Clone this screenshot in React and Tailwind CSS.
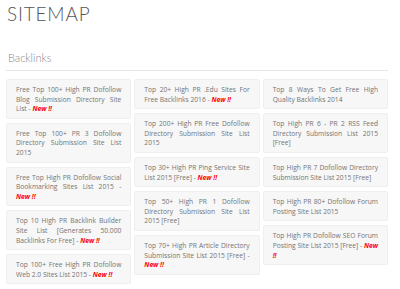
const columns = [
  [
    { t: 'Free Top 100+ High PR Dofollow Blog Submission Directory Site List', n: true },
    { t: 'Free Top 100+ PR 3 Dofollow Directory Submission Site List 2015' },
    { t: 'Free Top High PR Dofollow Social Bookmarking Sites List 2015', n: true },
    { t: 'Top 10 High PR Backlink Builder Site List [Generates 50.000 Backlinks For Free]', n: true },
    { t: 'Top 100+ Free High PR Dofollow Web 2.0 Sites List 2015', n: true },
  ],
  [
    { t: 'Top 20+ High PR .Edu Sites For Free Backlinks 2016', n: true },
    { t: 'Top 200+ High PR Free Dofollow Directory Submission Site List 2015' },
    { t: 'Top 30+ High PR Ping Service Site List 2015 [Free]', n: true },
    { t: 'Top 50+ High PR 1 Dofollow Directory Submission Site List 2015 [Free]' },
    { t: 'Top 70+ High PR Article Directory Submission Site List 2015 [Free]', n: true },
  ],
  [
    { t: 'Top 8 Ways To Get Free High Quality Backlinks 2014' },
    { t: 'Top High PR 6 - PR 2 RSS Feed Directory Submission List 2015 [Free]' },
    { t: 'Top High PR 7 Dofollow Directory Submission Site List 2015 [Free]' },
    { t: 'Top High PR 80+ Dofollow Forum Posting Site List 2015' },
    { t: 'Top High PR Dofollow SEO Forum Posting Site List 2015 [Free]', n: true },
  ],
];

function Card({ item }) {
  return (
    <div className="rounded-[2px] border border-[#efefef] bg-[#f7f7f7] px-[9px] pt-[5px] pb-[4px] text-justify text-[6.7px] leading-[9.6px] text-[#747474]">
      {item.t}
      {item.n && (
        <>
          {' - '}
          <span className="font-bold italic text-[#f00]">New !!</span>
        </>
      )}
    </div>
  );
}

export default function App() {
  return (
    <div className="h-[289px] w-[400px] overflow-hidden bg-white pl-[6px]" style={{ fontFamily: '"Open Sans", sans-serif' }}>
      <h1 className="pt-[3px] pl-[1px] text-[19px] font-light leading-[22px] tracking-[0.8px] text-[#555]" style={{ fontFamily: 'Lato, sans-serif' }}>
        SITEMAP
      </h1>
      <div className="w-[382px]">
        <h2 className="mt-[26px] pl-[2px] text-[11px] font-light leading-[14px] text-[#888]" style={{ fontFamily: 'Lato, sans-serif' }}>
          Backlinks
        </h2>
        <div className="mt-[5px] h-px bg-[#e6e6e6]" />
        <div className="mt-[8px] flex gap-[3px]">
          {columns.map((col, i) => (
            <div key={i} className="flex flex-1 flex-col gap-[4px]">
              {col.map((item, j) => (
                <Card key={j} item={item} />
              ))}
            </div>
          ))}
        </div>
      </div>
    </div>
  );
}
